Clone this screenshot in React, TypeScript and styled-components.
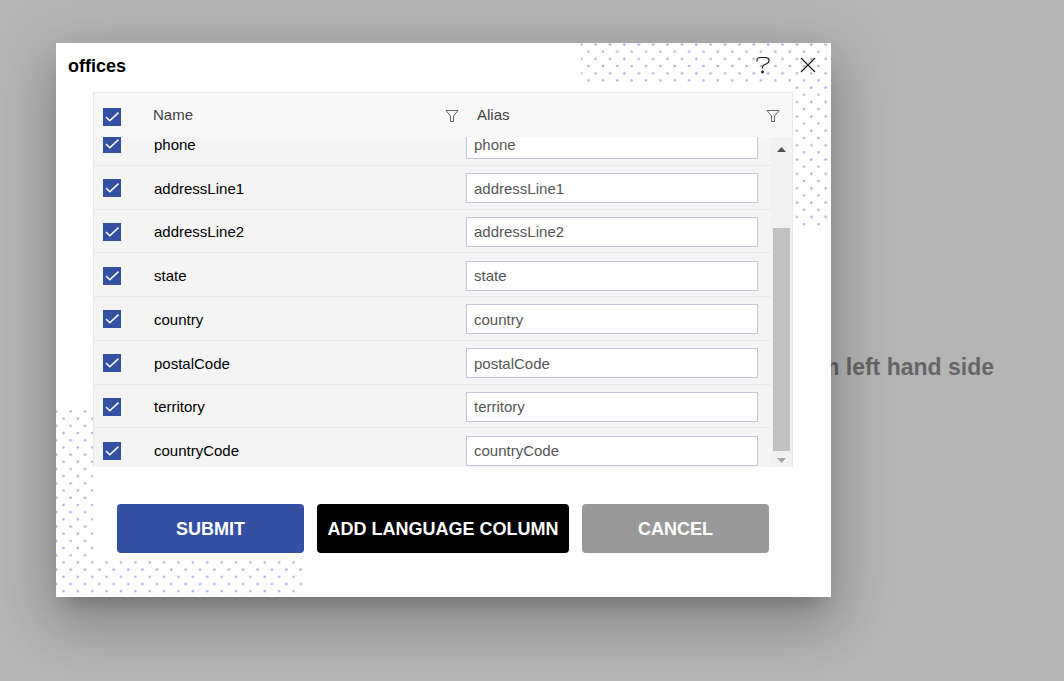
import React, { useState } from "react";
import styled, { createGlobalStyle } from "styled-components";

const GlobalStyle = createGlobalStyle`
  *, *::before, *::after { box-sizing: border-box; }
  body {
    margin: 0;
    background: #b5b5b5;
    font-family: "Liberation Sans", Arial, sans-serif;
    font-size: 15px;
    color: #000;
  }
`;

const Page = styled.main`
  display: grid;
  min-height: 100vh;
  overflow: hidden;
`;

const Hint = styled.h2`
  grid-area: 1 / 1;
  place-self: center end;
  margin: 52px 70px 0 0;
  font-size: 23px;
  line-height: 28px;
  color: #666;
  white-space: nowrap;
`;

const Dialog = styled.section`
  grid-area: 1 / 1;
  position: relative;
  align-self: start;
  width: calc(100% - 112px);
  max-width: 775px;
  margin: 43px 56px;
  padding-bottom: 39px;
  background: #fff;
  box-shadow:
    0 14px 19px -9px rgba(0, 0, 0, 0.2),
    0 30px 48px 4px rgba(0, 0, 0, 0.14),
    0 11px 58px 10px rgba(0, 0, 0, 0.12);
`;

const DotArt = styled.svg<{ $corner: "top" | "bottom" }>`
  position: absolute;
  ${(p) => (p.$corner === "top" ? "top: 0; right: 0;" : "bottom: 0; left: 0;")}
  width: 250px;
  height: 187px;
`;

const TitleBar = styled.header`
  position: relative;
  display: flex;
  align-items: center;
  justify-content: space-between;
  height: 42px;
  padding: 2px 11px 0 12px;
`;

const Title = styled.h1`
  margin: 0;
  padding-top: 2px;
  font-size: 18px;
  line-height: 24px;
`;

const TitleActions = styled.div`
  display: flex;
  gap: 20px;
`;

const IconButton = styled.button`
  display: flex;
  align-items: center;
  justify-content: center;
  width: 25px;
  height: 25px;
  padding: 0;
  border: 0;
  background: transparent;
  color: #1a1a1a;
  cursor: pointer;
`;

const Content = styled.div`
  position: relative;
  margin: 0 38px 0 37px;
  padding: 7px 0 5px;
  background: #fff;
`;

const Grid = styled.div`
  border: 1px solid #e8e8e8;
  border-bottom: 0;
  background: #f4f4f4;
`;

const GridTable = styled.table`
  width: 100%;
  table-layout: fixed;
  border-collapse: separate;
  border-spacing: 0;
`;

const HeaderTable = styled(GridTable)`
  height: 44px;
  background: #f8f8f8;
`;

const CheckCol = styled.col`
  width: 50px;
`;

const AliasCol = styled.col<{ $header?: boolean }>`
  width: ${(p) => (p.$header ? 326 : 305)}px;
`;

const HeadCell = styled.th`
  padding: 0 12px 2px 11px;
  font-weight: 400;
  text-align: left;
  color: #424242;
`;

const CheckHeadCell = styled(HeadCell)`
  padding: 4px 0 0 9px;
`;

const NameHeadCell = styled(HeadCell)`
  padding: 0 7px 2px 9px;
`;

const HeadLabel = styled.div`
  display: flex;
  align-items: center;
  justify-content: space-between;
`;

const FilterButton = styled.button`
  display: flex;
  align-items: flex-end;
  width: 14px;
  height: 16px;
  padding: 0;
  border: 0;
  background: transparent;
  color: #666;
  cursor: pointer;
`;

const Body = styled.div`
  display: flex;
  height: 330px;
`;

const Viewport = styled.div`
  flex: 1;
  min-width: 0;
  overflow: hidden;
`;

const BodyTable = styled(GridTable)`
  height: 350px;
  margin-top: -15px;
`;

const Cell = styled.td`
  padding: 2px 0 0 10px;
  border-bottom: 1px solid #e8e8e8;
`;

const CheckCell = styled(Cell)`
  padding: 2px 0 0 9px;
`;

const AliasCell = styled(Cell)`
  padding: 2px 13px 0 0;
`;

const AliasInput = styled.input`
  display: block;
  width: 100%;
  height: 30px;
  padding: 0 7px;
  border: 1px solid #bfc7d6;
  border-radius: 0;
  background: #fff;
  color: #555;
  font: inherit;
  outline: 0;
`;

const CheckWrap = styled.span`
  display: grid;
  width: 18px;
  height: 18px;
`;

const CheckInput = styled.input`
  grid-area: 1 / 1;
  appearance: none;
  width: 18px;
  height: 18px;
  margin: 0;
  border: 1px solid #3450a2;
  background: #fff;
  cursor: pointer;
  &:checked { background: #3450a2; }
`;

const CheckMark = styled.svg`
  grid-area: 1 / 1;
  width: 18px;
  height: 18px;
  pointer-events: none;
`;

const ScrollTrack = styled.div`
  display: flex;
  flex-direction: column;
  align-items: center;
  justify-content: space-between;
  width: 21px;
  padding: 0 2px;
  background: #f1f1f1;
`;

const ScrollArrow = styled.svg<{ $tall?: boolean }>`
  width: 17px;
  height: ${(p) => (p.$tall ? 24 : 16)}px;
`;

const ScrollThumb = styled.div`
  width: 17px;
  height: 223px;
  margin-top: auto;
  background: #c1c1c1;
`;

const Actions = styled.div`
  display: flex;
  justify-content: center;
  gap: 13px;
  padding-top: 37px;
`;

const ActionButton = styled.button<{ $tone: string; $wide?: boolean }>`
  width: ${(p) => (p.$wide ? 252 : 187)}px;
  height: 49px;
  padding: 2px 0 0;
  border: 0;
  border-radius: 4px;
  background: ${(p) => p.$tone};
  color: #fff;
  font: bold 18px "Liberation Sans", Arial, sans-serif;
  white-space: nowrap;
  cursor: pointer;
`;

const columns = [
  "phone",
  "addressLine1",
  "addressLine2",
  "state",
  "country",
  "postalCode",
  "territory",
  "countryCode",
];

function Dots({ corner }: { corner: "top" | "bottom" }) {
  const id = `dots-${corner}`;
  return (
    <DotArt $corner={corner} viewBox="0 0 250 187" aria-hidden="true">
      <defs>
        <pattern id={id} width="14.375" height="14.375" patternUnits="userSpaceOnUse">
          <g fill="#a9b6dd">
            <circle cx="0.3" cy="1.5" r="1.35" />
            <circle cx="14.675" cy="1.5" r="1.35" />
            <circle cx="7.5" cy="8.7" r="1.35" />
          </g>
        </pattern>
      </defs>
      <rect width="250" height="187" fill={`url(#${id})`} />
    </DotArt>
  );
}

function Checkbox({ label }: { label: string }) {
  const [checked, setChecked] = useState(true);
  return (
    <CheckWrap>
      <CheckInput
        type="checkbox"
        aria-label={label}
        checked={checked}
        onChange={(e) => setChecked(e.target.checked)}
      />
      <CheckMark viewBox="0 0 18 18" aria-hidden="true">
        <path d="M3 9l3.8 3.8L15.5 4.6" fill="none" stroke="#fff" strokeWidth="1.5" />
      </CheckMark>
    </CheckWrap>
  );
}

function Filter({ label }: { label: string }) {
  return (
    <FilterButton type="button" aria-label={label}>
      <svg width="14" height="13" viewBox="0 0 14 13" fill="none" stroke="currentColor">
        <path d="M1 1.5h12L8.5 7v5.5h-3V7z" />
      </svg>
    </FilterButton>
  );
}

export default function App() {
  return (
    <>
      <GlobalStyle />
      <Page>
        <Hint>Select a table from left hand side</Hint>
        <Dialog role="dialog" aria-labelledby="dialog-title">
          <Dots corner="top" />
          <Dots corner="bottom" />
          <TitleBar>
            <Title id="dialog-title">offices</Title>
            <TitleActions>
              <IconButton type="button" aria-label="Help">
                <svg width="14" height="18" viewBox="0 0 14 18" fill="none" stroke="currentColor" strokeWidth="1.2">
                  <path d="M1 5.5V4.5C1 2.5 2.5 1.5 4.5 1.5h5c2 0 3.500 1 3.500 3s-1 2.700-2.500 3.300L8 9c-1.200.6-1.500 1.200-1.500 2.300v1.200" />
                  <circle cx="6.5" cy="16" r="1.4" fill="currentColor" stroke="none" />
                </svg>
              </IconButton>
              <IconButton type="button" aria-label="Close">
                <svg width="16" height="16" viewBox="0 0 16 16" fill="none" stroke="currentColor" strokeWidth="1.2">
                  <path d="M1 1l14 14M15 1L1 15" />
                </svg>
              </IconButton>
            </TitleActions>
          </TitleBar>
          <Content>
            <Grid>
              <HeaderTable>
                <colgroup>
                  <CheckCol />
                  <col />
                  <AliasCol $header />
                </colgroup>
                <thead>
                  <tr>
                    <CheckHeadCell>
                      <Checkbox label="Select all columns" />
                    </CheckHeadCell>
                    <NameHeadCell>
                      <HeadLabel>
                        Name
                        <Filter label="Filter by name" />
                      </HeadLabel>
                    </NameHeadCell>
                    <HeadCell>
                      <HeadLabel>
                        Alias
                        <Filter label="Filter by alias" />
                      </HeadLabel>
                    </HeadCell>
                  </tr>
                </thead>
              </HeaderTable>
              <Body>
                <Viewport>
                  <BodyTable>
                    <colgroup>
                      <CheckCol />
                      <col />
                      <AliasCol />
                    </colgroup>
                    <tbody>
                      {columns.map((name) => (
                        <tr key={name}>
                          <CheckCell>
                            <Checkbox label={`Include ${name}`} />
                          </CheckCell>
                          <Cell>{name}</Cell>
                          <AliasCell>
                            <AliasInput type="text" aria-label={`Alias for ${name}`} defaultValue={name} />
                          </AliasCell>
                        </tr>
                      ))}
                    </tbody>
                  </BodyTable>
                </Viewport>
                <ScrollTrack aria-hidden="true">
                  <ScrollArrow $tall viewBox="0 0 17 24">
                    <path d="M4 15l4.5-5L13 15z" fill="#505050" />
                  </ScrollArrow>
                  <ScrollThumb />
                  <ScrollArrow viewBox="0 0 17 16">
                    <path d="M4 7l4.5 5L13 7z" fill="#a3a3a3" />
                  </ScrollArrow>
                </ScrollTrack>
              </Body>
            </Grid>
            <Actions>
              <ActionButton type="submit" $tone="#3450a2">SUBMIT</ActionButton>
              <ActionButton type="button" $tone="#000" $wide>ADD LANGUAGE COLUMN</ActionButton>
              <ActionButton type="button" $tone="#999">CANCEL</ActionButton>
            </Actions>
          </Content>
        </Dialog>
      </Page>
    </>
  );
}
